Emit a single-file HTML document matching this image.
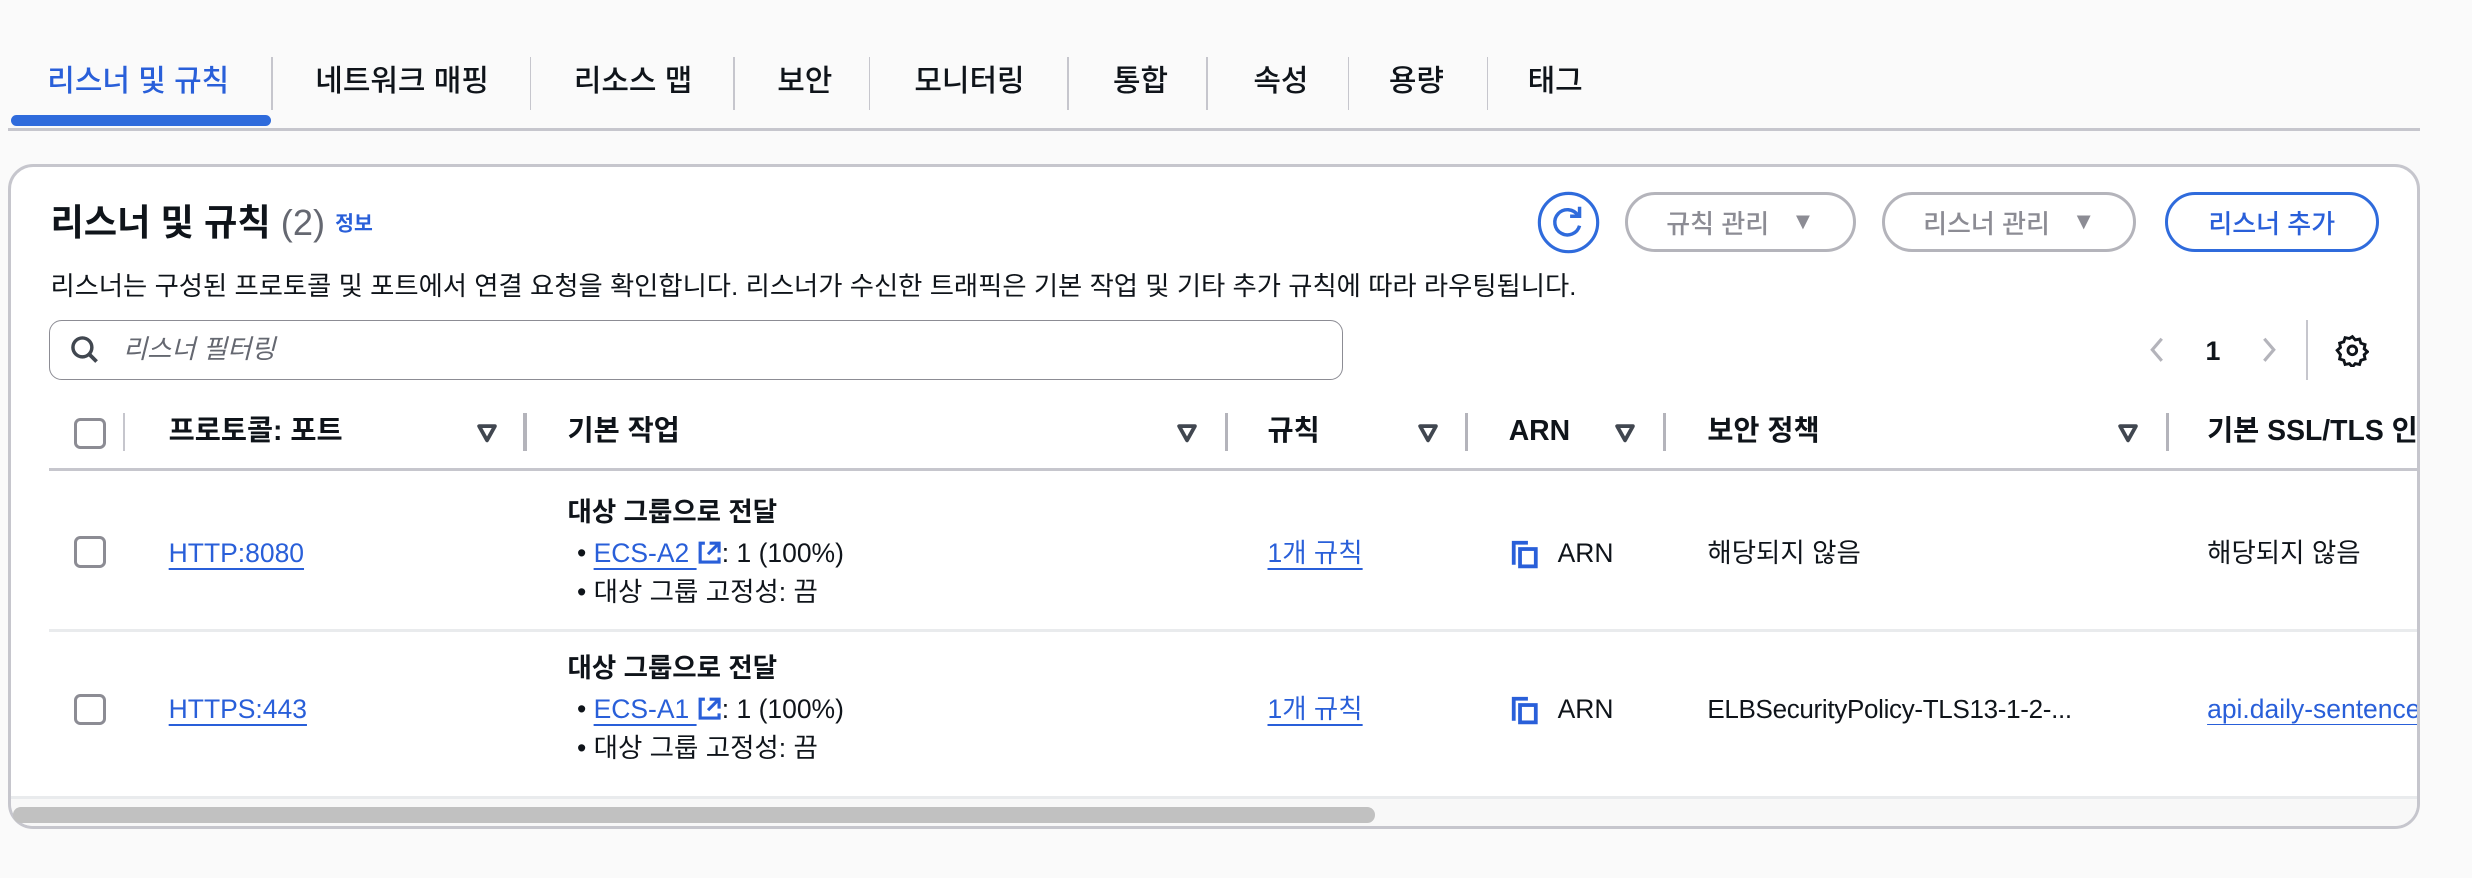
<!DOCTYPE html>
<html><head><meta charset="utf-8"><style>
*{box-sizing:border-box;margin:0;padding:0}
html,body{width:2472px;height:878px;overflow:hidden;background:#fafafa}
#w{zoom:1.5765;width:1568px;height:557px;position:relative;font-family:"Liberation Sans","Noto Sans CJK KR",sans-serif;color:#0f141a;font-size:16.8px}
.a{position:absolute;white-space:nowrap;line-height:20px}
.tab{position:absolute;top:42px;line-height:20px;font-size:19px;font-weight:500;color:#0f141a;white-space:nowrap}
.sep{position:absolute;top:36px;width:1px;height:34px;background:#c6c6cd}
.card{position:absolute;left:5px;top:104px;width:1530px;height:422px;background:#fff;border:2px solid #c6c6cd;border-radius:16px;overflow:hidden}
.btn{position:absolute;top:122px;height:38px;border:2px solid #b4b4bb;border-radius:20px;color:#8c8c94;font-size:16.5px;font-weight:500;display:flex;align-items:center;justify-content:center;gap:14px;white-space:nowrap}
.hd{position:absolute;top:264px;line-height:20px;font-weight:600;font-size:18px;white-space:nowrap}
.srt{position:absolute;top:268px}
.dv{position:absolute;top:262px;width:2px;height:24px;background:#b4b4bb}
.cb{position:absolute;left:47px;width:20px;height:20px;border:2px solid #8c8c94;border-radius:4px;background:#fff}
.lk{color:#295fd9;text-decoration:underline;text-underline-offset:4px}
</style></head><body><div id="w">
<div class="tab" style="left:30px;color:#295fd9">리스너 및 규칙</div>
<div class="sep" style="left:172px"></div>
<div class="tab" style="left:200px">네트워크 매핑</div>
<div class="sep" style="left:336px"></div>
<div class="tab" style="left:364px">리소스 맵</div>
<div class="sep" style="left:465px"></div>
<div class="tab" style="left:493px">보안</div>
<div class="sep" style="left:551px"></div>
<div class="tab" style="left:580px">모니터링</div>
<div class="sep" style="left:677px"></div>
<div class="tab" style="left:706px">통합</div>
<div class="sep" style="left:765px"></div>
<div class="tab" style="left:795px">속성</div>
<div class="sep" style="left:855px"></div>
<div class="tab" style="left:881px">용량</div>
<div class="sep" style="left:943px"></div>
<div class="tab" style="left:969px">태그</div>
<div class="a" style="left:5px;top:81px;width:1530px;height:2px;background:#c6c6cd"></div>
<div class="a" style="left:7px;top:73px;width:165px;height:7px;background:#2f6bdc;border-radius:4px"></div>

<div class="card"></div>
<div class="a" style="left:32px;top:128px;line-height:26px;font-size:23px;font-weight:700">리스너 및 규칙 <span style="font-weight:400;color:#656871">(2)</span> <span style="font-size:13px;color:#295fd9;font-weight:700;vertical-align:3px">정보</span></div>
<div class="a" style="left:32px;top:172px;font-size:16.7px">리스너는 구성된 프로토콜 및 포트에서 연결 요청을 확인합니다. 리스너가 수신한 트래픽은 기본 작업 및 기타 추가 규칙에 따라 라우팅됩니다.</div>

<svg class="a" style="left:975px;top:121px" width="40" height="40" viewBox="0 0 40 40"><circle cx="20" cy="20" r="18.5" fill="#fff" stroke="#2f6bdc" stroke-width="2"/><path d="M26 15.5A8 8 0 1 0 27 22" fill="none" stroke="#2f6bdc" stroke-width="2.2"/><path d="M27 10v6h-6" fill="none" stroke="#2f6bdc" stroke-width="2.2"/></svg>
<div class="btn" style="left:1031px;width:146px">규칙 관리 <span style="font-size:15px">▼</span></div>
<div class="btn" style="left:1194px;width:161px">리스너 관리 <span style="font-size:15px">▼</span></div>
<div class="btn" style="left:1373px;width:136px;border-color:#2f6bdc;color:#295fd9">리스너 추가</div>

<div class="a" style="left:31px;top:203px;width:821px;height:38px;border:1px solid #8c8c94;border-radius:8px"></div>
<svg class="a" style="left:44px;top:212px" width="20" height="20" viewBox="0 0 20 20"><circle cx="8.5" cy="8.5" r="6" fill="none" stroke="#414750" stroke-width="2.2"/><path d="M13 13l4.5 4.5" stroke="#414750" stroke-width="2.4"/></svg>
<div class="a" style="left:78px;top:212px;font-style:italic;color:#656871;font-size:16.7px">리스너 필터링</div>

<svg class="a" style="left:1361px;top:212px" width="14" height="20" viewBox="0 0 14 20"><path d="M10 3L4 10l6 7" fill="none" stroke="#b4b4bb" stroke-width="2"/></svg>
<div class="a" style="left:1399px;top:213px;font-weight:700;font-size:17px">1</div>
<svg class="a" style="left:1432px;top:212px" width="14" height="20" viewBox="0 0 14 20"><path d="M4 3l6 7-6 7" fill="none" stroke="#b4b4bb" stroke-width="2"/></svg>
<div class="a" style="left:1463px;top:203px;width:1px;height:38px;background:#c6c6cd"></div>
<svg class="a" style="left:1481px;top:211px" width="22" height="22" viewBox="0 0 24 24"><path d="M12 2.5l2 2.3 3-.6.9 2.9 2.9.9-.6 3 2.3 2-2.3 2 .6 3-2.9.9-.9 2.9-3-.6-2 2.3-2-2.3-3 .6-.9-2.9-2.9-.9.6-3L1.5 12l2.3-2-.6-3 2.9-.9.9-2.9 3 .6z" fill="none" stroke="#0f141a" stroke-width="2"/><circle cx="12" cy="12" r="3" fill="none" stroke="#0f141a" stroke-width="2"/></svg>

<div class="cb" style="top:265px"></div>
<div class="a" style="left:78px;top:262px;width:1px;height:24px;background:#c6c6cd"></div>
<div class="hd" style="left:107px">프로토콜: 포트</div><svg class="srt" style="left:302px" width="14" height="13" viewBox="0 0 14 13"><path d="M2 2h10L7 11z" fill="none" stroke="#414750" stroke-width="2.4" stroke-linejoin="round"/></svg><div class="dv" style="left:332px"></div>
<div class="hd" style="left:360px">기본 작업</div><svg class="srt" style="left:746px" width="14" height="13" viewBox="0 0 14 13"><path d="M2 2h10L7 11z" fill="none" stroke="#414750" stroke-width="2.4" stroke-linejoin="round"/></svg><div class="dv" style="left:777px"></div>
<div class="hd" style="left:804px">규칙</div><svg class="srt" style="left:899px" width="14" height="13" viewBox="0 0 14 13"><path d="M2 2h10L7 11z" fill="none" stroke="#414750" stroke-width="2.4" stroke-linejoin="round"/></svg><div class="dv" style="left:929px"></div>
<div class="hd" style="left:957px">ARN</div><svg class="srt" style="left:1024px" width="14" height="13" viewBox="0 0 14 13"><path d="M2 2h10L7 11z" fill="none" stroke="#414750" stroke-width="2.4" stroke-linejoin="round"/></svg><div class="dv" style="left:1055px"></div>
<div class="hd" style="left:1083px">보안 정책</div><svg class="srt" style="left:1343px" width="14" height="13" viewBox="0 0 14 13"><path d="M2 2h10L7 11z" fill="none" stroke="#414750" stroke-width="2.4" stroke-linejoin="round"/></svg><div class="dv" style="left:1374px"></div>
<div class="hd" style="left:1400px;width:133px;overflow:hidden">기본 SSL/TLS 인증서</div>
<div class="a" style="left:31px;top:297px;width:1502px;height:2px;background:#c6c6cd"></div>

<!-- row 1 -->
<div class="cb" style="top:340px"></div>
<div class="a lk" style="left:107px;top:341px">HTTP:8080</div>
<div class="a" style="left:360px;top:315px;font-weight:700">대상 그룹으로 전달</div>
<div class="a" style="left:366px;top:341px">• <span class="lk">ECS-A2 <svg width="16" height="16" viewBox="0 0 16 16" style="vertical-align:-2px"><path d="M5 2H2v12h12v-3" fill="none" stroke="#295fd9" stroke-width="2"/><path d="M8 2h6v6M14 2L7 9" fill="none" stroke="#295fd9" stroke-width="2"/></svg></span>: 1 (100%)</div>
<div class="a" style="left:366px;top:366px">• 대상 그룹 고정성: 끔</div>
<div class="a lk" style="left:804px;top:341px">1개 규칙</div>
<svg class="a" style="left:957px;top:341px" width="20" height="20" viewBox="0 0 20 20"><path d="M3 17V3h9" fill="none" stroke="#295fd9" stroke-width="2.4"/><rect x="7" y="7" width="10" height="11" fill="none" stroke="#295fd9" stroke-width="2.4"/></svg>
<div class="a" style="left:988px;top:341px">ARN</div>
<div class="a" style="left:1083px;top:341px">해당되지 않음</div>
<div class="a" style="left:1400px;top:341px">해당되지 않음</div>
<div class="a" style="left:31px;top:399px;width:1502px;height:2px;background:#e9ebed"></div>

<!-- row 2 -->
<div class="cb" style="top:440px"></div>
<div class="a lk" style="left:107px;top:440px">HTTPS:443</div>
<div class="a" style="left:360px;top:414px;font-weight:700">대상 그룹으로 전달</div>
<div class="a" style="left:366px;top:440px">• <span class="lk">ECS-A1 <svg width="16" height="16" viewBox="0 0 16 16" style="vertical-align:-2px"><path d="M5 2H2v12h12v-3" fill="none" stroke="#295fd9" stroke-width="2"/><path d="M8 2h6v6M14 2L7 9" fill="none" stroke="#295fd9" stroke-width="2"/></svg></span>: 1 (100%)</div>
<div class="a" style="left:366px;top:465px">• 대상 그룹 고정성: 끔</div>
<div class="a lk" style="left:804px;top:440px">1개 규칙</div>
<svg class="a" style="left:957px;top:440px" width="20" height="20" viewBox="0 0 20 20"><path d="M3 17V3h9" fill="none" stroke="#295fd9" stroke-width="2.4"/><rect x="7" y="7" width="10" height="11" fill="none" stroke="#295fd9" stroke-width="2.4"/></svg>
<div class="a" style="left:988px;top:440px">ARN</div>
<div class="a" style="left:1083px;top:440px;font-size:16.5px;letter-spacing:-0.2px">ELBSecurityPolicy-TLS13-1-2-...</div>
<div class="a lk" style="left:1400px;top:440px;width:133px;overflow:hidden">api.daily-sentence.com</div>
<div class="a" style="left:7px;top:505px;width:1526px;height:19px;background:#f8f8f8;border-top:2px solid #e9ebed;border-radius:0 0 14px 14px"></div>
<div class="a" style="left:8px;top:512px;width:864px;height:10px;background:#c1c1c1;border-radius:5px"></div>
</div></body></html>
